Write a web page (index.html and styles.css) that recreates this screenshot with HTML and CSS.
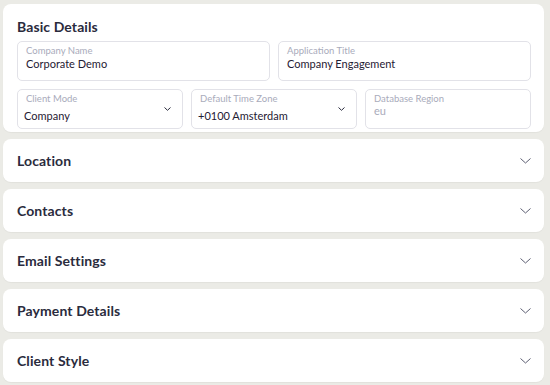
FILE: index.html
```html
<html>
<head>
  <title>Client Settings</title>
  <link rel="stylesheet" href="styles.css">
</head>
<body>
    <div class="stack">
        <div class="card card_open">
            <div class="card_title">Basic Details</div>
            <div class="fields two">
                <div class="field">
                    <div class="field_label">Company Name</div>
                    <div class="field_value">Corporate Demo</div>
                </div>
                <div class="field">
                    <div class="field_label">Application Title</div>
                    <div class="field_value">Company Engagement</div>
                </div>
            </div>
            <div class="fields three">
                <div class="field select">
                    <div class="field_label">Client Mode</div>
                    <div class="field_value">Company</div>
                    <svg class="select_arrow" width="7" height="4" viewBox="0 0 7 4"><path d="M0.5 0.5 L3.5 3.3 L6.5 0.5" fill="none" stroke="#2a2b3d" stroke-width="1"/></svg>
                </div>
                <div class="field select">
                    <div class="field_label">Default Time Zone</div>
                    <div class="field_value">+0100 Amsterdam</div>
                    <svg class="select_arrow" width="7" height="4" viewBox="0 0 7 4"><path d="M0.5 0.5 L3.5 3.3 L6.5 0.5" fill="none" stroke="#2a2b3d" stroke-width="1"/></svg>
                </div>
                <div class="field">
                    <div class="field_label">Database Region</div>
                    <div class="field_value muted">eu</div>
                </div>
            </div>
        </div>

        <div class="card">
            <div class="card_title">Location</div>
            <svg class="chevron" width="11" height="6" viewBox="0 0 11 6"><path d="M0.5 0.5 L5.5 5 L10.5 0.5" fill="none" stroke="#5c5e72" stroke-width="1"/></svg>
        </div>
        <div class="card">
            <div class="card_title">Contacts</div>
            <svg class="chevron" width="11" height="6" viewBox="0 0 11 6"><path d="M0.5 0.5 L5.5 5 L10.5 0.5" fill="none" stroke="#5c5e72" stroke-width="1"/></svg>
        </div>
        <div class="card">
            <div class="card_title">Email Settings</div>
            <svg class="chevron" width="11" height="6" viewBox="0 0 11 6"><path d="M0.5 0.5 L5.5 5 L10.5 0.5" fill="none" stroke="#5c5e72" stroke-width="1"/></svg>
        </div>
        <div class="card">
            <div class="card_title">Payment Details</div>
            <svg class="chevron" width="11" height="6" viewBox="0 0 11 6"><path d="M0.5 0.5 L5.5 5 L10.5 0.5" fill="none" stroke="#5c5e72" stroke-width="1"/></svg>
        </div>
        <div class="card">
            <div class="card_title">Client Style</div>
            <svg class="chevron" width="11" height="6" viewBox="0 0 11 6"><path d="M0.5 0.5 L5.5 5 L10.5 0.5" fill="none" stroke="#5c5e72" stroke-width="1"/></svg>
        </div>
    </div>
</body>
</html>
```

FILE: styles.css
```css
body {
    margin: 0px;
    padding: 4px 6px 0px 3px;
    font-family: Lato, "Open Sans", sans-serif;
    background-color: #ebebe6;
}

.stack {
    display: flex;
    flex-direction: column;
    gap: 7px;
}

.card {
    background-color: #fff;
    border-radius: 8px;
    height: 43px;
    box-sizing: border-box;
    padding: 0px 13px 0px 14px;
    display: flex;
    align-items: center;
    justify-content: space-between;
    box-shadow: 0px 1px 1px rgba(0, 0, 0, 0.04);
}

.card_open {
    height: 128px;
    display: block;
    padding: 14px 13px 0px 14px;
}

.card_title {
    font-size: 14px;
    font-weight: bold;
    color: #2a2b3d;
    letter-spacing: 0.1px;
}

.card_open .card_title {
    margin-bottom: 6px;
}

.fields {
    display: grid;
    gap: 8px;
    margin-bottom: 8px;
}

.two {
    grid-template-columns: 1fr 1fr;
}

.three {
    grid-template-columns: 1fr 1fr 1fr;
}

.field {
    position: relative;
    height: 40px;
    box-sizing: border-box;
    border: 1px solid #e2e2e8;
    border-radius: 5px;
    padding: 3px 8px 0px 8px;
}

.field_label {
    font-size: 9.5px;
    color: #a9abbb;
    line-height: 12px;
}

.field_value {
    font-size: 11px;
    color: #1f2033;
    line-height: 14px;
}

.select .field_value {
    margin-top: 4px;
    margin-left: -2px;
}

.muted {
    color: #a9abbb;
    margin-top: -1px;
}

.select_arrow {
    position: absolute;
    right: 11px;
    top: 17px;
}
```
